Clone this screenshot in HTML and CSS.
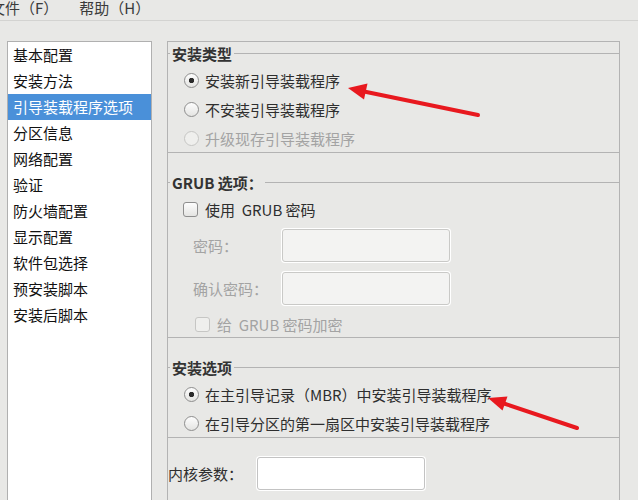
FILE: index.html
```html
<!DOCTYPE html>
<html lang="zh-CN">
<head>
<title>Kickstart 配置程序</title>
<meta charset="UTF-8">
<meta name="viewport" content="width=device-width, initial-scale=1.0">
<link rel="stylesheet" href="styles.css">
</head>
<body>

<div class="menubar">
  <span class="menu-item first">文件（F）</span>
  <span class="menu-item">帮助（H）</span>
</div>

<div class="main">
  <ul class="nav-list">
    <li>基本配置</li>
    <li>安装方法</li>
    <li class="active">引导装载程序选项</li>
    <li>分区信息</li>
    <li>网络配置</li>
    <li>验证</li>
    <li>防火墙配置</li>
    <li>显示配置</li>
    <li>软件包选择</li>
    <li>预安装脚本</li>
    <li>安装后脚本</li>
  </ul>

  <div class="content">
    <fieldset class="group">
      <legend>安装类型</legend>
      <label class="option"><input type="radio" name="type" checked><span>安装新引导装载程序</span></label>
      <label class="option"><input type="radio" name="type"><span>不安装引导装载程序</span></label>
      <label class="option disabled"><input type="radio" name="type" disabled><span>升级现存引导装载程序</span></label>
    </fieldset>

    <fieldset class="group grub">
      <legend>GRUB 选项：</legend>
      <label class="check"><input type="checkbox"><span>使用&nbsp; GRUB 密码</span></label>
      <div class="field disabled">
        <span class="field-label">密码：</span>
        <input type="password" class="text-input" disabled>
      </div>
      <div class="field confirm disabled">
        <span class="field-label">确认密码：</span>
        <input type="password" class="text-input" disabled>
      </div>
      <label class="check sub disabled"><input type="checkbox" disabled><span>给&nbsp; GRUB 密码加密</span></label>
    </fieldset>

    <fieldset class="group options">
      <legend>安装选项</legend>
      <label class="option"><input type="radio" name="where" checked><span>在主引导记录（MBR）中安装引导装载程序</span></label>
      <label class="option"><input type="radio" name="where"><span>在引导分区的第一扇区中安装引导装载程序</span></label>
    </fieldset>

    <div class="field kernel">
      <span class="field-label">内核参数：</span>
      <input type="text" class="text-input">
    </div>
  </div>
</div>

<svg class="arrows" width="638" height="500" viewBox="0 0 638 500">
  <line x1="478" y1="115" x2="364" y2="91.5" stroke="#e8191f" stroke-width="4" stroke-linecap="round"/>
  <polygon points="348,88 367.5,83.5 364,99.5" fill="#e8191f"/>
  <line x1="577" y1="428" x2="504" y2="403.5" stroke="#e8191f" stroke-width="4" stroke-linecap="round"/>
  <polygon points="488,398 507.5,396.5 502.5,410.5" fill="#e8191f"/>
</svg>

</body>
</html>
```

FILE: styles.css
```css
html, body {
  height: 500px;
  overflow: hidden;
}

body {
  margin: 0;
  position: relative;
  background: #e8e8e6;
  font-family: "Noto Sans CJK SC", "Noto Sans", sans-serif;
  font-size: 15px;
  color: #2e2e2e;
}

.menubar {
  height: 20px;
  line-height: 15px;
  border-bottom: 1px solid #d3d3d1;
  display: flex;
  gap: 21px;
  color: #3a3a3a;
}

.menu-item.first {
  margin-left: -10px;
}

.main {
  display: flex;
  align-items: flex-start;
  padding: 20px 0 0 7px;
}

.nav-list {
  list-style: none;
  margin: 0;
  padding: 0;
  width: 143px;
  height: 470px;
  background: #fff;
  border: 1px solid #b0b0b0;
  border-bottom: none;
}

.nav-list li {
  height: 26px;
  line-height: 26px;
  padding-left: 5px;
  color: #111;
}

.nav-list li.active {
  background: #4a90d9;
  color: #fff;
}

.content {
  margin-left: 15px;
  width: 451px;
  height: 470px;
  border: 1px solid #b3b3b3;
  border-bottom: none;
}

.group {
  margin: 0 -1px;
  padding: 1px 0 0 0;
  min-width: 0;
  border: 1px solid #b3b3b3;
}

.group + .group {
  margin-top: 18px;
}

.group legend {
  margin-left: 2px;
  padding: 0 2px;
  line-height: 23px;
  font-weight: bold;
  color: #333;
}

.option,
.check {
  display: flex;
  align-items: center;
  height: 29px;
  padding-left: 16px;
  gap: 6px;
}

.option:last-child {
  height: 28px;
}

.check {
  height: 28px;
  padding-left: 15px;
  gap: 7px;
}

.check.sub {
  height: 25px;
  margin-top: 6px;
  padding-left: 27px;
}

.disabled {
  color: #a3a3a3;
}

.option input,
.check input {
  appearance: none;
  margin: 0;
  width: 15px;
  height: 15px;
  flex: none;
  border: 1px solid #8e8e8e;
  background: linear-gradient(#fdfdfd, #e4e4e2);
}

.option input {
  border-radius: 50%;
}

.option input:checked {
  background: radial-gradient(circle, #2b2b2b 0 2.4px, transparent 3px), linear-gradient(#fdfdfd, #e4e4e2);
}

.check input {
  border-radius: 3px;
}

.option input:disabled,
.check input:disabled {
  border-color: #c6c6c4;
  background: #efefed;
}

.field {
  display: flex;
  align-items: center;
  height: 35px;
  margin-top: 5px;
  padding-left: 25px;
}

.field.confirm {
  margin-top: 8px;
}

.field-label {
  width: 88px;
  flex: none;
}

.text-input {
  box-sizing: border-box;
  width: 168px;
  height: 33px;
  margin: 0 0 0 1px;
  border: 1px solid #c3c3c3;
  border-radius: 3px;
  background: #fff;
  box-shadow: 0 0 0 1px #fff;
  font: inherit;
}

.text-input:disabled {
  background: #f3f3f2;
  border-color: #c9c9c7;
}

.field.kernel {
  margin-top: 18px;
  padding-left: 0;
}

.arrows {
  position: absolute;
  left: 0;
  top: 0;
  pointer-events: none;
}
```
